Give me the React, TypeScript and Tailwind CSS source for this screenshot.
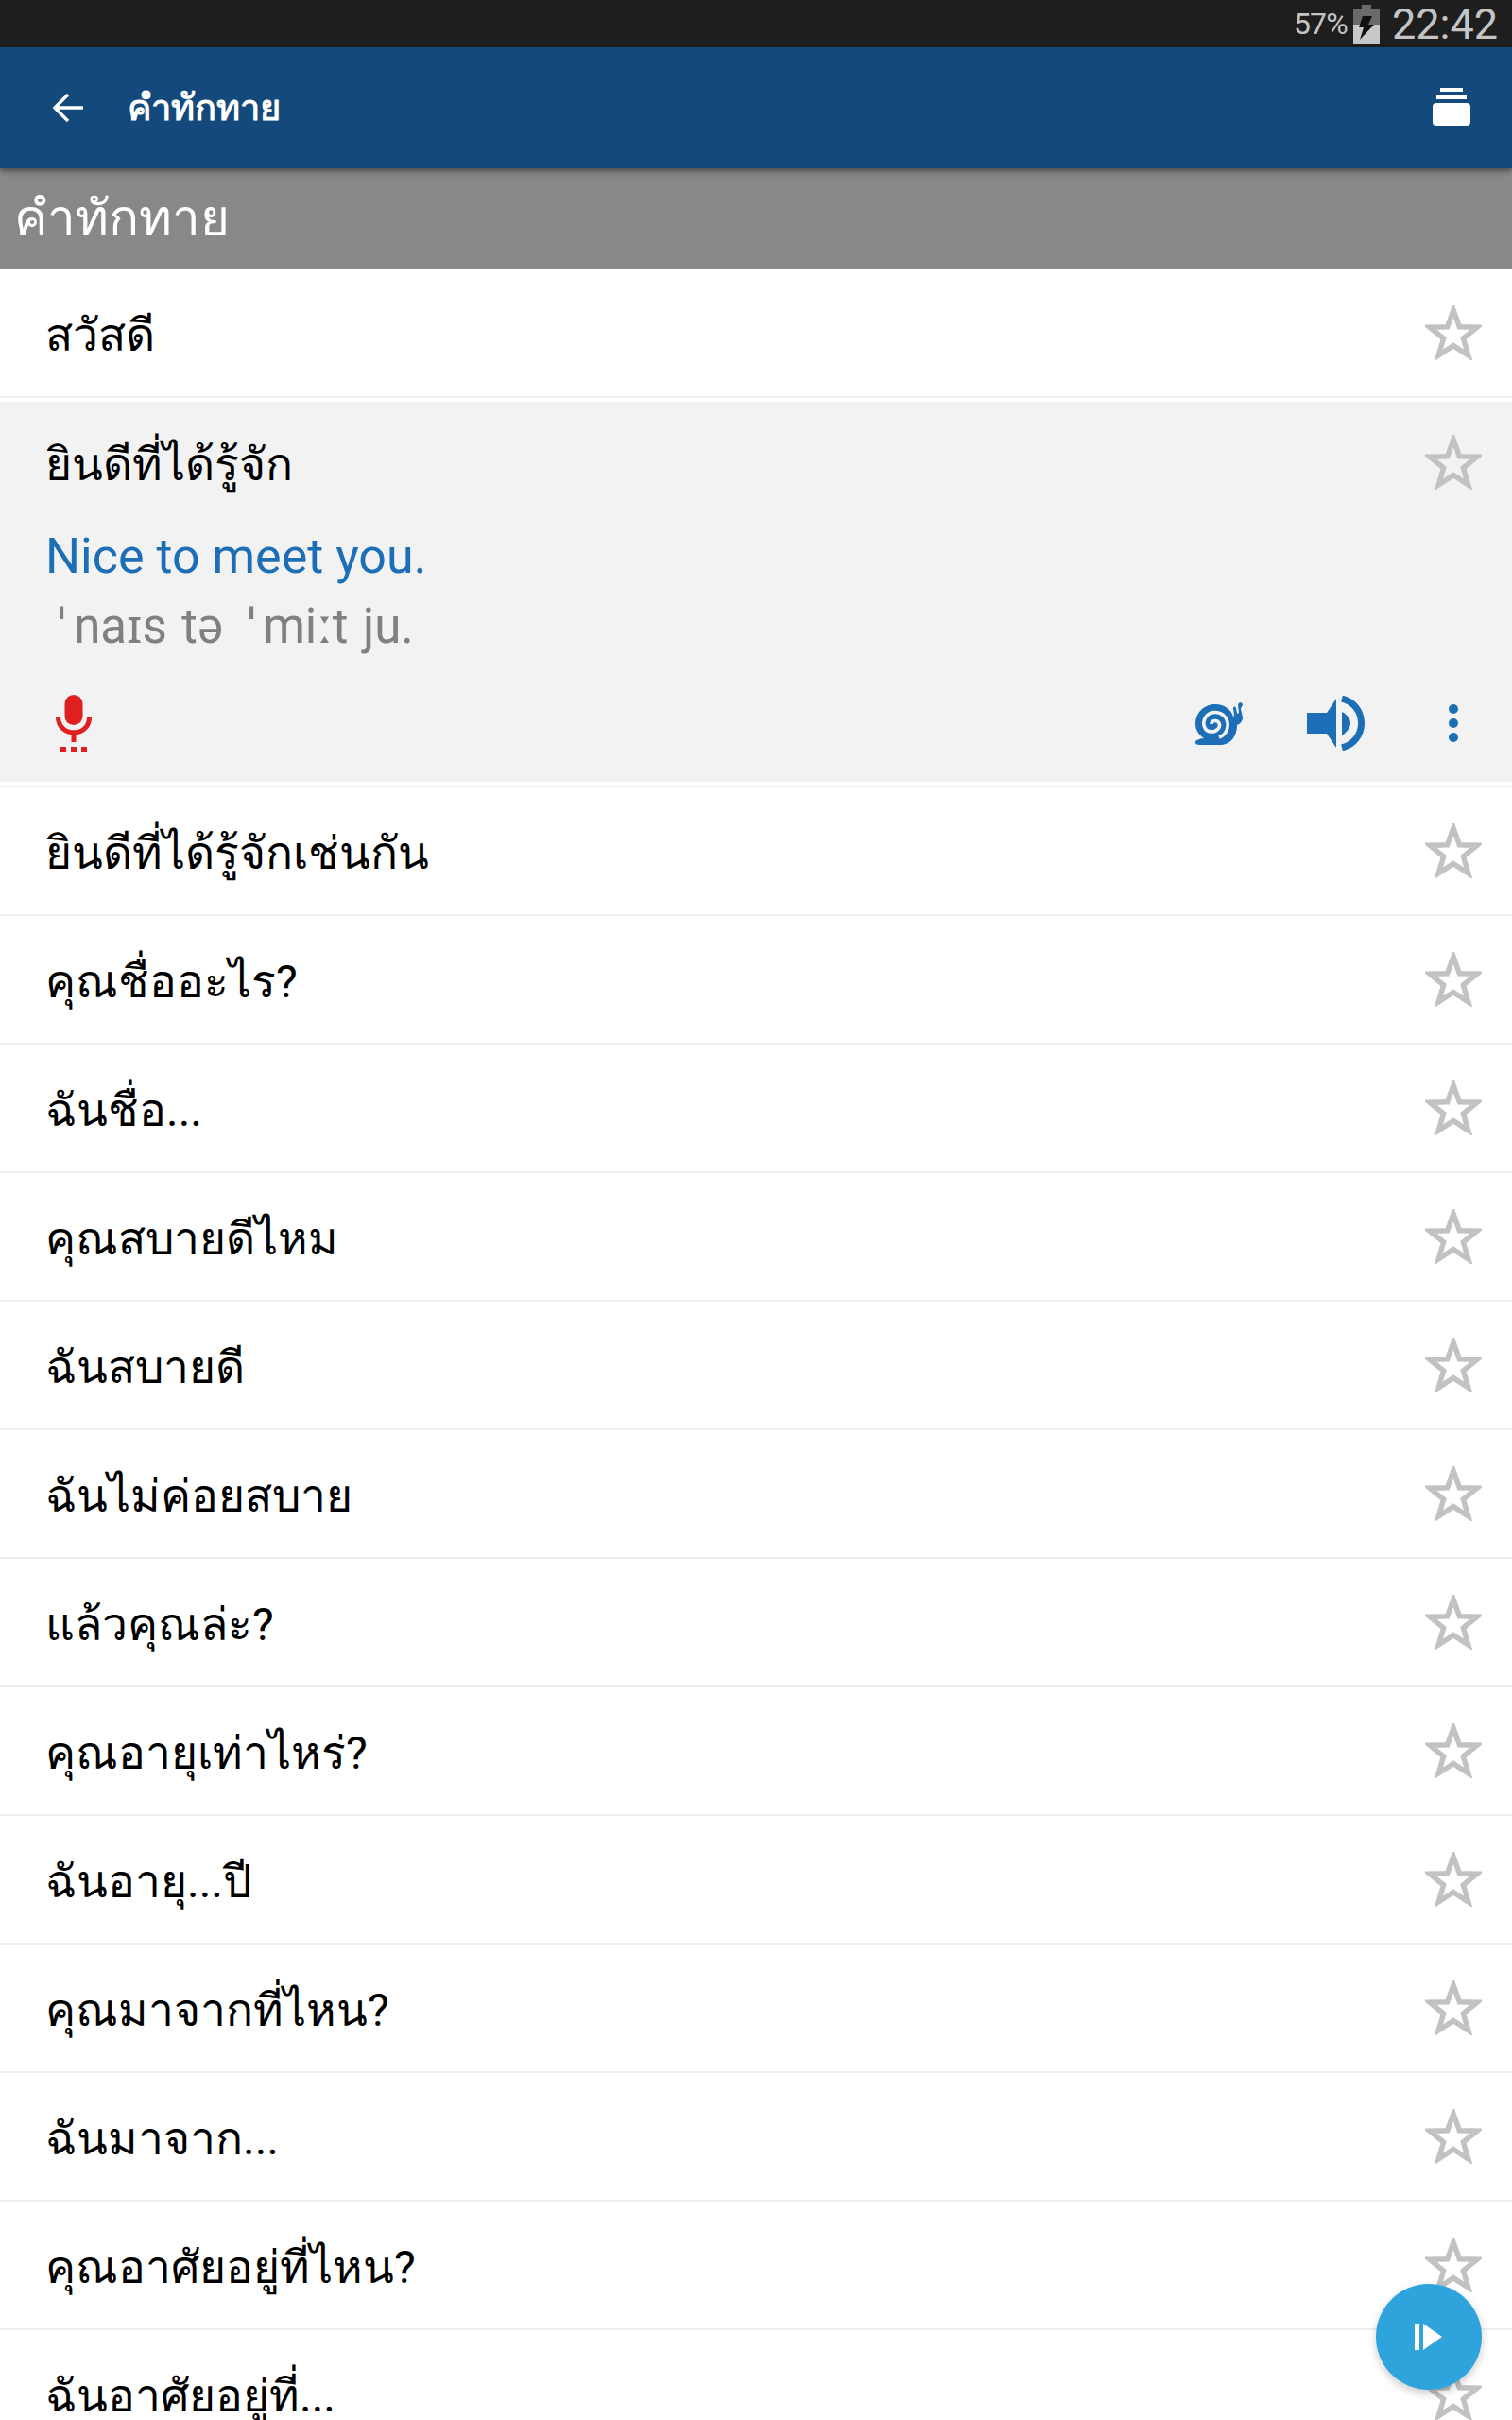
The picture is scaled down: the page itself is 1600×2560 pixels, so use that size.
const phrasesAfter = [
  "ยินดีที่ได้รู้จักเช่นกัน",
  "คุณชื่ออะไร?",
  "ฉันชื่อ...",
  "คุณสบายดีไหม",
  "ฉันสบายดี",
  "ฉันไม่ค่อยสบาย",
  "แล้วคุณล่ะ?",
  "คุณอายุเท่าไหร่?",
  "ฉันอายุ...ปี",
  "คุณมาจากที่ไหน?",
  "ฉันมาจาก...",
  "คุณอาศัยอยู่ที่ไหน?",
  "ฉันอาศัยอยู่ที่...",
];

const Star = () => (
  <svg width="60" height="58" viewBox="0 0 60 58" className="shrink-0">
    <path
      d="M30 5 L36.4 22.8 L55 23.2 L40.4 35 L45.8 53 L30 42.6 L14.2 53 L19.6 35 L5 23.2 L23.6 22.8 Z"
      fill="none"
      stroke="#c2c2c2"
      strokeWidth="5.5"
    />
  </svg>
);

const Row = ({ text }: { text: string }) => (
  <div className="h-[136px] shrink-0 flex items-center justify-between pl-12 pr-8 border-b-2 border-[#eeeeee]">
    <span className="text-[48px] leading-none text-black pt-[5px]">{text}</span>
    <Star />
  </div>
);

const Snail = () => (
  <svg width="50" height="45" viewBox="0 0 50 45">
    <path
      d="M0 41 C3 39 6 38 9 38 C3 34 0 29 0 23 C0 11 9 2 21 2 C31 2 38 8 40 15 L41 14 L40 6 C40 4 42 4 43 6 L44 12 L46 11 L45 3 C45 0 49 -1 50 2 C50 4 48 5 48 7 L50 16 C50 20 47 23 44 24 C44 35 38 45 26 45 L4 45 C1 45 -1 43 0 41 Z"
      fill="#1c6fb7"
    />
    <path
      d="M25 37 C33 34 36 26 33 18 C29 10 18 8 12 14 C6 21 9 31 17 31 C23 31 27 26 25 22 C23 18 17 19 17 23"
      fill="none"
      stroke="#f2f2f3"
      strokeWidth="3.6"
    />
  </svg>
);

const Speaker = () => (
  <svg width="61" height="58" viewBox="0 0 61 58">
    <path d="M0 18 H21 L31 3 V55 L21 40 H0 Z" fill="#1c6fb7" />
    <path d="M37 17 C43 20 46 25 46 29 C46 33 43 38 37 42 Z" fill="#1c6fb7" />
    <path
      d="M37 3 C49 6 57.5 16 57.5 29 C57.5 42 49 52 37 55"
      fill="none"
      stroke="#1c6fb7"
      strokeWidth="7"
    />
  </svg>
);

export default function App() {
  return (
    <div className="w-[1600px] h-[2560px] overflow-hidden relative bg-white font-['Roboto','Noto_Sans',sans-serif]">
      <div className="h-[50px] bg-[#1e1e1e] flex items-center justify-end pr-[15px] gap-[6px] text-[#c4c4c4]">
        <span className="text-[32px] leading-none tracking-tight">57%</span>
        <svg width="28" height="46" viewBox="0 0 28 46">
          <rect x="9" y="3" width="10" height="6" fill="#6a6a6a" />
          <rect x="0" y="8" width="28" height="16" fill="#6a6a6a" />
          <rect x="0" y="24" width="28" height="21" fill="#c8c8c8" />
          <path d="M10 15 L20 15 L16 24 L22 24 L7 40 L11 27 L6 27 Z" fill="#111111" />
        </svg>
        <span className="text-[45px] leading-none ml-[7px]">22:42</span>
      </div>
      <div className="h-[128px] bg-[#14497b] flex items-center justify-between pl-14 pr-[44px] relative z-10 shadow-[0_3px_6px_rgba(0,0,0,0.45)]">
        <div className="flex items-center gap-[47px]">
          <svg width="32" height="32" viewBox="0 0 32 32" fill="none" stroke="white" strokeWidth="3.4">
            <path d="M32 16 H2 M16 2 L2 16 L16 30" />
          </svg>
          <span className="text-[38px] leading-none font-bold text-white">คำทักทาย</span>
        </div>
        <svg width="40" height="42" viewBox="0 0 40 42" fill="white">
          <rect x="8" y="0" width="24" height="4" />
          <rect x="4" y="8" width="32" height="4" />
          <rect x="0" y="16" width="40" height="24" rx="4" />
        </svg>
      </div>
      <div className="h-[107px] bg-[#888888] flex items-center pl-[15px]">
        <span className="text-[53px] leading-none text-white">คำทักทาย</span>
      </div>
      <Row text="สวัสดี" />
      <div className="h-[412px] border-b-2 border-[#eeeeee] pt-[4px]">
        <div className="h-[402px] bg-[#f2f2f3] pl-12 pr-8 flex flex-col">
          <div className="h-[128px] flex items-center justify-between shrink-0">
            <span className="text-[48px] leading-none text-black pt-[5px]">ยินดีที่ได้รู้จัก</span>
            <Star />
          </div>
          <span className="text-[52px] leading-none text-[#1c6fb7] mt-[10px]">Nice to meet you.</span>
          <div className="flex text-[51px] leading-none text-[#808080] mt-[22px] whitespace-pre [word-spacing:3px]">
            <span className="ml-[13px]">ˈ</span>
            <span className="ml-[9px]">naɪs tə</span>
            <span className="ml-[26px]">ˈ</span>
            <span className="ml-[8px]">miːt ju.</span>
          </div>
          <div className="flex items-center justify-between mt-auto pb-[32px]">
            <svg width="38" height="60" viewBox="0 0 38 60" className="ml-[11px]">
              <rect x="9.5" y="0" width="19" height="32" rx="9.5" fill="#e02020" />
              <path d="M2.5 24 C3 45 35.5 45 35.5 24" fill="none" stroke="#e02020" strokeWidth="5" />
              <rect x="16.5" y="38" width="5" height="12" fill="#e02020" />
              <rect x="5" y="55" width="6" height="5" fill="#e02020" />
              <rect x="16" y="55" width="6" height="5" fill="#e02020" />
              <rect x="27" y="55" width="6" height="5" fill="#e02020" />
            </svg>
            <div className="flex items-center">
              <Snail />
              <div className="ml-[68px]">
                <Speaker />
              </div>
              <svg width="10" height="40" viewBox="0 0 10 40" fill="#1c6fb7" className="ml-[89px] mr-[25px]">
                <circle cx="5" cy="5" r="5" />
                <circle cx="5" cy="20" r="5" />
                <circle cx="5" cy="35" r="5" />
              </svg>
            </div>
          </div>
        </div>
      </div>
      {phrasesAfter.map((phrase, i) => (
        <Row key={i} text={phrase} />
      ))}
      <div className="absolute left-[1456px] top-[2416px] w-[112px] h-[112px] rounded-full bg-[#2fa3dc] flex items-center justify-center shadow-[0_4px_10px_rgba(0,0,0,0.2)] z-20">
        <svg width="30" height="28" viewBox="0 0 30 28" fill="white">
          <rect x="0" y="0" width="5" height="28" />
          <path d="M9 0 L29 14 L9 28 Z" />
        </svg>
      </div>
    </div>
  );
}
